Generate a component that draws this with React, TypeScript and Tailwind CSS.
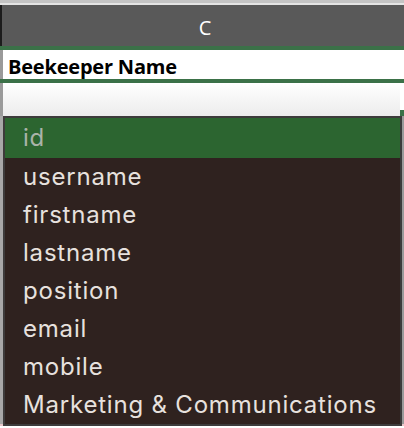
const fields = [
  "username",
  "firstname",
  "lastname",
  "position",
  "email",
  "mobile",
  "Marketing & Communications",
];

export default function App() {
  return (
    <div className="relative w-[404px] h-[428px] overflow-hidden bg-white font-['Open_Sans',sans-serif]">
      {/* window chrome strip */}
      <div className="h-[3px] bg-[#c4c4c4]" />
      <div className="h-[2px] bg-[#e4e4e4]" />

      {/* column header */}
      <div className="flex h-[41px]">
        <div className="w-[2px] bg-[#1c1c1c]" />
        <div className="flex-1 flex items-center justify-center bg-[#595959] pl-[4px] pt-[5px] text-white text-[20px]">
          C
        </div>
      </div>
      <div className="h-[4px] bg-[#3b7148]" />

      {/* cell with header text */}
      <div className="flex h-[29px]">
        <div className="w-[3px] bg-[#9a9a9a]" />
        <div className="flex-1 flex items-end pl-[5px] pb-[2px] text-[20px] font-bold leading-none tracking-[-0.2px] text-black">
          Beekeeper Name
        </div>
      </div>
      <div className="h-[4px] bg-[#3b7148]" />

      {/* active cell */}
      <div className="flex h-[33px]">
        <div className="w-[3px] bg-[#9a9a9a]" />
        <div className="flex-1 bg-gradient-to-b from-white to-[#ececec]" />
        <div className="w-[4px] flex flex-col justify-end">
          <div className="h-[6px] bg-[#3b7148]" />
        </div>
      </div>

      {/* grid behind the list */}
      <div className="flex h-[308px]">
        <div className="w-[3px] bg-[#a8a8a8]" />
        <div className="flex-1" />
        <div className="w-[4px] bg-[#9a9a9a]" />
      </div>
      <div className="h-[2px] bg-[#e7c6c9]" />

      {/* autocomplete list */}
      <div className="absolute left-[3px] top-[116px] w-[399px] h-[310px] border-2 border-[#3d3b3b] bg-[#2f221f] font-['Inter',sans-serif] text-[24px] tracking-[0.8px]">
        <div className="flex items-center h-[40px] pl-[18px] bg-[#2c6530] text-[#aab3a9]">
          id
        </div>
        {fields.map((f) => (
          <div key={f} className="flex items-center h-[38px] pl-[18px] text-[#e7e1de]">
            {f}
          </div>
        ))}
      </div>
    </div>
  );
}
